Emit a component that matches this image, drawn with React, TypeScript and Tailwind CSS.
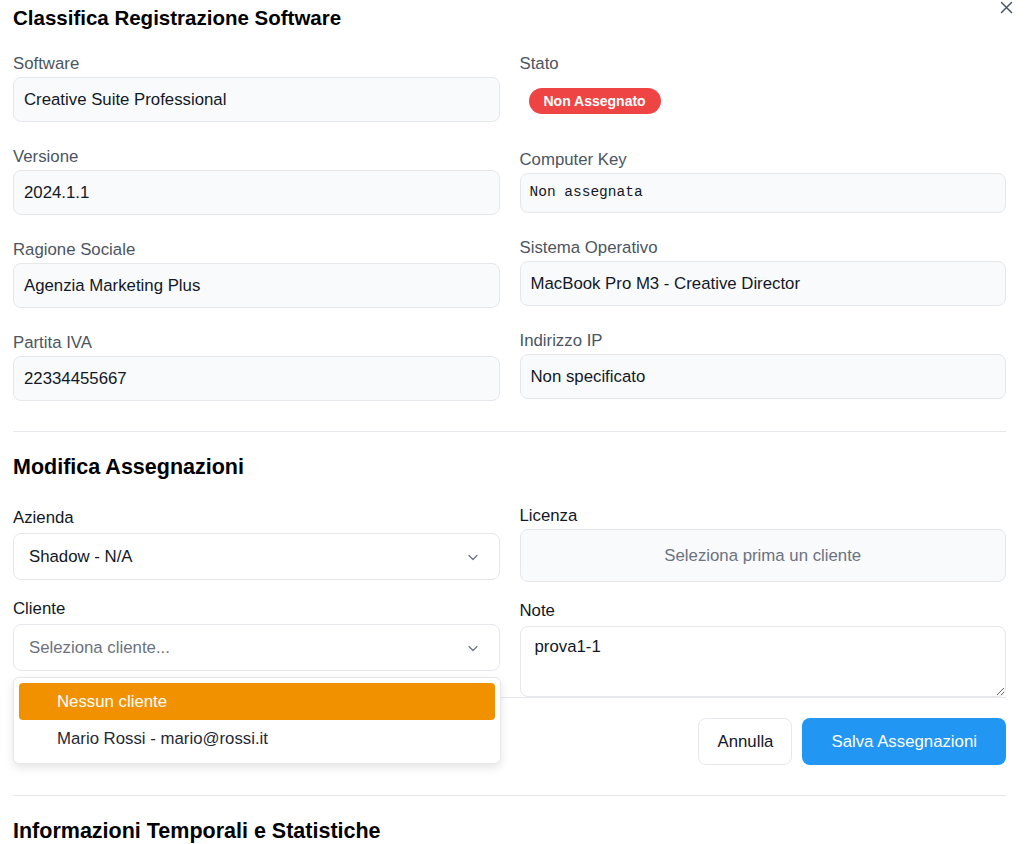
import React from 'react';

const ReadOnlyBox: React.FC<{ label: string; value: string; mono?: boolean }> = ({ label, value, mono }) => {
  return (
    <div className="flex flex-col">
      <label className="mb-[2px] block text-[16.8px] leading-[22px] text-[#4b5563]">{label}</label>
      {mono ? (
        <div className="flex h-[40px] items-center rounded-lg border border-[#e5e7eb] bg-[#f9fafb] px-[9px] font-['Liberation_Mono',monospace] text-[14.5px] text-[#111827]">
          {value}
        </div>
      ) : (
        <div className="flex h-[45px] items-center rounded-lg border border-[#e5e7eb] bg-[#f9fafb] px-2.5 text-[16.8px] text-[#111827]">
          {value}
        </div>
      )}
    </div>
  );
};

const Chevron = () => (
  <svg width="14" height="14" viewBox="0 0 14 14" fill="none" className="shrink-0">
    <path d="M3 5.5l4 4 4-4" stroke="#6b7280" strokeWidth="1.2" strokeLinecap="round" strokeLinejoin="round" />
  </svg>
);

export default function App() {
  return (
    <div className="relative min-h-[844px] w-full overflow-hidden bg-white pb-10 pl-[13px] pr-[24px] pt-1 font-['Liberation_Sans',Arial,sans-serif] text-[#111827]">
      <button className="absolute right-[17px] top-[1px] text-[#4b5563]" aria-label="Chiudi">
        <svg width="13" height="13" viewBox="0 0 13 13" fill="none">
          <path d="M1.5 1.5l10 10M11.5 1.5l-10 10" stroke="currentColor" strokeWidth="1.5" strokeLinecap="round" />
        </svg>
      </button>

      <h2 className="text-[20.5px] font-bold leading-7 text-black">Classifica Registrazione Software</h2>

      <div className="mt-[21px] grid grid-cols-2 gap-x-5">
        <div className="flex flex-col gap-6">
          <ReadOnlyBox label="Software" value="Creative Suite Professional" />
          <ReadOnlyBox label="Versione" value="2024.1.1" />
          <ReadOnlyBox label="Ragione Sociale" value="Agenzia Marketing Plus" />
          <ReadOnlyBox label="Partita IVA" value="22334455667" />
        </div>
        <div className="flex flex-col gap-6">
          <div className="flex flex-col">
            <label className="mb-[2px] block text-[16.8px] leading-[22px] text-[#4b5563]">Stato</label>
            <div className="flex h-[48px] items-center pl-[9px]">
              <span className="flex h-[26px] items-center rounded-full bg-[#ef4444] px-[15px] text-sm font-bold text-white">
                Non Assegnato
              </span>
            </div>
          </div>
          <ReadOnlyBox label="Computer Key" value="Non assegnata" mono />
          <ReadOnlyBox label="Sistema Operativo" value="MacBook Pro M3 - Creative Director" />
          <ReadOnlyBox label="Indirizzo IP" value="Non specificato" />
        </div>
      </div>

      <div className="mt-[30px] border-t border-[#e5e7eb] pt-[21px]">
        <h2 className="text-[21.5px] font-bold leading-7 text-black">Modifica Assegnazioni</h2>

        <div className="mt-6 grid grid-cols-2 gap-x-5">
          <div className="flex flex-col gap-4">
            <div className="flex flex-col">
              <label className="mb-[2px] block text-[16.8px] leading-[26px] text-[#111827]">Azienda</label>
              <div className="flex h-[47px] items-center justify-between rounded-lg border border-[#e5e7eb] bg-white pl-[15px] pr-[19px] text-[16.8px] text-[#111827]">
                <span>Shadow - N/A</span>
                <Chevron />
              </div>
            </div>
            <div className="relative flex flex-col">
              <label className="mb-[2px] block text-[16.8px] leading-[26px] text-[#111827]">Cliente</label>
              <div className="flex h-[47px] items-center justify-between rounded-lg border border-[#e5e7eb] bg-white pl-[15px] pr-[19px] text-[16.8px] text-[#6b7280]">
                <span>Seleziona cliente...</span>
                <Chevron />
              </div>
              <div className="absolute left-0 right-[-1px] top-full z-10 mt-[6px] rounded-md border border-[#e5e7eb] bg-white px-[5px] py-[5px] shadow-[0_4px_10px_rgba(0,0,0,0.1)]">
                <div className="flex h-[37px] items-center rounded bg-[#f29100] pl-[38px] text-[16.8px] text-white">
                  Nessun cliente
                </div>
                <div className="flex h-[38px] items-center pl-[38px] text-[16.8px] text-[#1f2937]">
                  Mario Rossi - mario@rossi.it
                </div>
              </div>
            </div>
          </div>

          <div className="flex flex-col gap-4">
            <div className="flex flex-col">
              <label className="mb-[2px] block text-[16.8px] leading-[22px] text-[#111827]">Licenza</label>
              <div className="flex h-[53px] items-center justify-center rounded-lg border border-[#e5e7eb] bg-[#f9fafb] text-[16.8px] text-[#6b7280]">
                Seleziona prima un cliente
              </div>
            </div>
            <div className="flex flex-col">
              <label className="mb-[2px] block text-[16.8px] leading-[26px] text-[#111827]">Note</label>
              <textarea
                className="block h-[71px] w-full resize-y rounded-lg border border-[#e5e7eb] bg-white px-[14px] pt-[10px] text-[16.8px] leading-5 text-[#111827] outline-none"
                defaultValue="prova1-1"
              />
            </div>
          </div>
        </div>

        <div className="flex justify-end gap-2.5 border-t border-[#e5e7eb] pt-5">
          <button className="h-[47px] rounded-lg border border-[#e5e7eb] bg-white px-[18px] text-[16.8px] text-[#111827]">
            Annulla
          </button>
          <button className="h-[47px] rounded-lg bg-[#2196f3] px-[29px] text-[16.8px] text-white">Salva Assegnazioni</button>
        </div>
      </div>

      <div className="mt-[30px] border-t border-[#e5e7eb] pt-[21px]">
        <h2 className="text-[21.5px] font-bold leading-7 text-black">Informazioni Temporali e Statistiche</h2>
      </div>
    </div>
  );
}
